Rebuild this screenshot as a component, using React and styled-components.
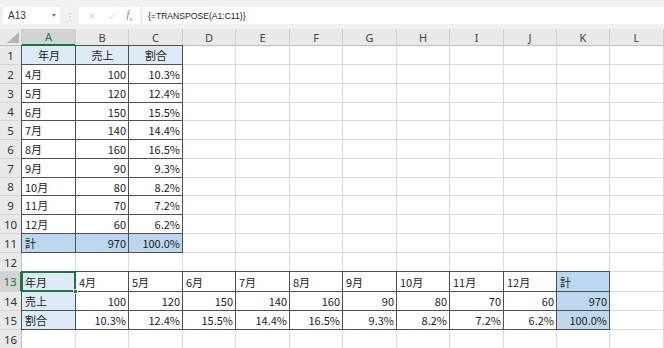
import React from "react";
import styled, { createGlobalStyle, css } from "styled-components";
import { X, Check } from "lucide-react";

const GlobalStyle = createGlobalStyle`
  *, *::before, *::after { box-sizing: border-box; }
  html, body { margin: 0; padding: 0; background: #fff; }
  body { font-family: "Noto Sans CJK JP", "Noto Sans", sans-serif; }
`;

const GREEN = "#217346";
const COLS = ["A", "B", "C", "D", "E", "F", "G", "H", "I", "J", "K", "L"];
const COL_WIDTHS = [54, 53, 54, 53, 54, 53, 54, 53, 54, 53, 53, 54];
const ROW_HEIGHTS = [19, 19, 19, 18, 19, 19, 19, 18, 19, 19, 19, 19, 20, 19, 19, 19];

const Window = styled.div`
  width: 664px;
  height: 348px;
  overflow: hidden;
  display: flex;
  flex-direction: column;
  background: #fff;
`;

const FormulaBar = styled.div`
  height: 29px;
  flex: none;
  display: flex;
  align-items: flex-start;
  padding-top: 7px;
  background: #f1f1f1;
`;

const NameBox = styled.div`
  width: 57px;
  height: 17px;
  margin-left: 3px;
  background: #fff;
  display: flex;
  align-items: center;
  justify-content: space-between;
  padding: 0 4px 0 5px;
  font-family: "Liberation Sans", sans-serif;
  font-size: 10px;
  color: #333;
`;

const Caret = styled.span`
  width: 0;
  height: 0;
  border-left: 2.5px solid transparent;
  border-right: 2.5px solid transparent;
  border-top: 3px solid #777;
`;

const Dots = styled.div`
  width: 19px;
  height: 17px;
  display: flex;
  align-items: center;
  justify-content: center;
  color: #b9b9b9;
  font-size: 10px;
`;

const IconBox = styled.div`
  width: 61px;
  height: 17px;
  background: #fff;
  display: flex;
  align-items: center;
  justify-content: space-around;
  padding: 0 3px;
  color: #b3b3b3;
`;

const Fx = styled.span`
  font-family: "Liberation Serif", serif;
  font-style: italic;
  font-size: 10px;
  color: #777;
  sub {
    font-size: 6px;
  }
`;

const FormulaInput = styled.div`
  flex: 1;
  height: 17px;
  margin-left: 3px;
  background: #fff;
  display: flex;
  align-items: center;
  padding-left: 5px;
  font-family: "Liberation Sans", sans-serif;
  font-size: 8.6px;
  color: #222;
`;

const Sheet = styled.div`
  flex: 1;
  display: grid;
  grid-template-columns: 22px ${COL_WIDTHS.map((w) => `${w}px`).join(" ")};
  grid-template-rows: 17px ${ROW_HEIGHTS.map((h) => `${h}px`).join(" ")};
`;

const Corner = styled.div`
  background: #e9e9e9;
  border-right: 1px solid #cfcfcf;
  border-bottom: 1px solid #bfbfbf;
  display: flex;
  justify-content: flex-end;
  align-items: flex-end;
  padding: 0 2px 2px 0;

  &::after {
    content: "";
    width: 12px;
    height: 11px;
    background: #b5b5b5;
    clip-path: polygon(100% 0, 100% 100%, 0 100%);
  }
`;

const ColHeader = styled.div`
  background: ${(p) => (p.$active ? "#d3d3d3" : "#e9e9e9")};
  color: ${(p) => (p.$active ? GREEN : "#444")};
  border-right: 1px solid #d0d0d0;
  border-bottom: ${(p) => (p.$active ? `2px solid ${GREEN}` : "1px solid #bfbfbf")};
  display: flex;
  align-items: center;
  justify-content: center;
  font-family: "Noto Sans", sans-serif;
  font-size: 11px;
`;

const RowHeader = styled.div`
  background: ${(p) => (p.$active ? "#d3d3d3" : "#e9e9e9")};
  color: ${(p) => (p.$active ? GREEN : "#333")};
  border-right: ${(p) => (p.$active ? `2px solid ${GREEN}` : "1px solid #bfbfbf")};
  border-bottom: 1px solid #d6d6d6;
  display: flex;
  align-items: center;
  justify-content: center;
  font-family: "Noto Sans", sans-serif;
  font-size: 11.5px;
`;

const fills = { light: "#ddebf7", dark: "#bdd7ee" };

const Cell = styled.div`
  position: relative;
  background: ${(p) => fills[p.$fill] || "#fff"};
  border-right: 1px solid #dadada;
  border-bottom: 1px solid #dadada;
  display: flex;
  align-items: center;
  justify-content: ${(p) =>
    p.$align === "right" ? "flex-end" : p.$align === "center" ? "center" : "flex-start"};
  padding: 0 2px 0 3px;
  font-size: 11px;
  color: #1c1c1c;
  white-space: nowrap;

  ${(p) =>
    p.$boxed &&
    css`
      &::after {
        content: "";
        position: absolute;
        left: -1px;
        top: -1px;
        right: -1px;
        bottom: -1px;
        border: 1px solid #505050;
        pointer-events: none;
      }
    `}

  ${(p) =>
    p.$selected &&
    css`
      z-index: 2;
      &::before {
        content: "";
        position: absolute;
        left: -1px;
        top: -1px;
        right: -1px;
        bottom: -1px;
        border: 2px solid ${GREEN};
        z-index: 2;
        pointer-events: none;
      }
    `}
`;

const Handle = styled.span`
  position: absolute;
  right: -3px;
  bottom: -3px;
  width: 5px;
  height: 5px;
  background: ${GREEN};
  border: 1px solid #fff;
  z-index: 3;
`;

const months = ["4月", "5月", "6月", "7月", "8月", "9月", "10月", "11月", "12月"];
const sales = [100, 120, 150, 140, 160, 90, 80, 70, 60];
const pcts = ["10.3%", "12.4%", "15.5%", "14.4%", "16.5%", "9.3%", "8.2%", "7.2%", "6.2%"];

// build cell contents keyed by "row-col"
const cells = {};
const put = (r, c, text, align = "left", fill) => {
  cells[`${r}-${c}`] = { text, align, fill };
};

put(1, 0, "年月", "center", "light");
put(1, 1, "売上", "center", "light");
put(1, 2, "割合", "center", "light");
months.forEach((m, i) => {
  put(i + 2, 0, m);
  put(i + 2, 1, sales[i], "right");
  put(i + 2, 2, pcts[i], "right");
});
put(11, 0, "計", "left", "dark");
put(11, 1, 970, "right", "dark");
put(11, 2, "100.0%", "right", "dark");

put(13, 0, "年月", "left", "light");
put(14, 0, "売上", "left", "light");
put(15, 0, "割合", "left", "light");
months.forEach((m, i) => {
  put(13, i + 1, m);
  put(14, i + 1, sales[i], "right");
  put(15, i + 1, pcts[i], "right");
});
put(13, 10, "計", "left", "dark");
put(14, 10, 970, "right", "dark");
put(15, 10, "100.0%", "right", "dark");

const isBoxed = (r, c) => (r >= 1 && r <= 11 && c <= 2) || (r >= 13 && r <= 15 && c <= 10);

export default function App() {
  return (
    <Window>
      <GlobalStyle />
      <FormulaBar>
        <NameBox>
          A13
          <Caret />
        </NameBox>
        <Dots>⋮</Dots>
        <IconBox>
          <X size={10} strokeWidth={1.4} />
          <Check size={10} strokeWidth={1.4} />
          <Fx>
            f<sub>x</sub>
          </Fx>
        </IconBox>
        <FormulaInput>{"{=TRANSPOSE(A1:C11)}"}</FormulaInput>
      </FormulaBar>
      <Sheet>
        <Corner />
        {COLS.map((c) => (
          <ColHeader key={c} $active={c === "A"}>
            {c}
          </ColHeader>
        ))}
        {ROW_HEIGHTS.map((_, i) => {
          const r = i + 1;
          return (
            <React.Fragment key={r}>
              <RowHeader $active={r === 13}>{r}</RowHeader>
              {COLS.map((col, c) => {
                const data = cells[`${r}-${c}`];
                const selected = r === 13 && c === 0;
                return (
                  <Cell
                    key={col}
                    $align={data?.align}
                    $fill={data?.fill}
                    $boxed={isBoxed(r, c)}
                    $selected={selected}
                  >
                    {data?.text}
                    {selected && <Handle />}
                  </Cell>
                );
              })}
            </React.Fragment>
          );
        })}
      </Sheet>
    </Window>
  );
}
